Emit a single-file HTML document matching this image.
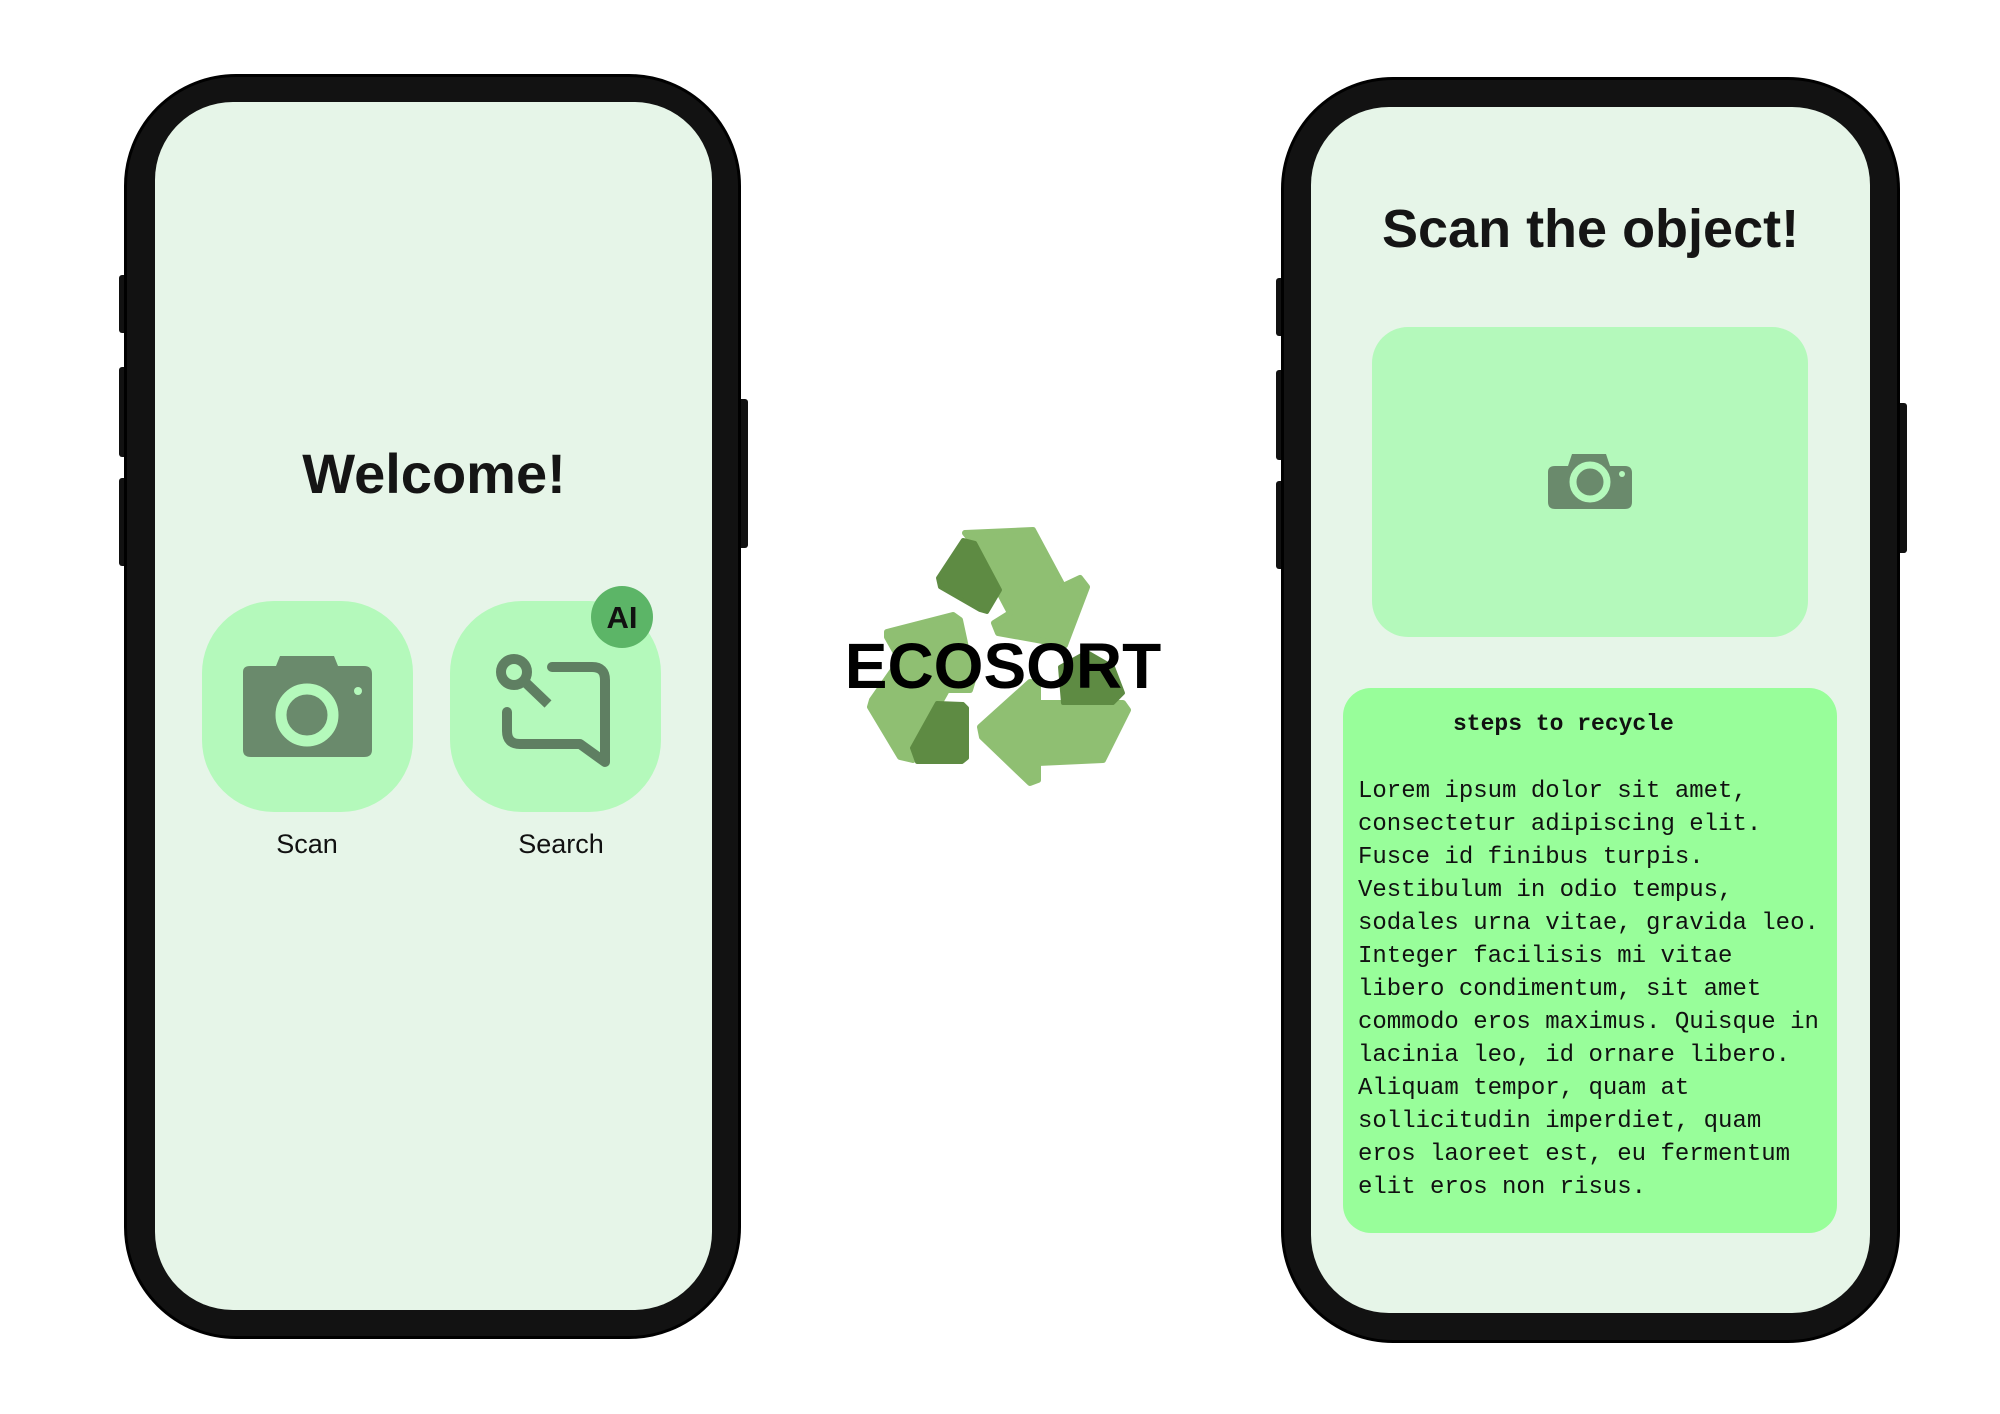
<!DOCTYPE html>
<html><head><meta charset="utf-8"><style>
*{margin:0;padding:0;box-sizing:border-box}
body{width:2000px;height:1414px;background:#fff;position:relative;overflow:hidden;font-family:"Liberation Sans",sans-serif}
.ph{position:absolute;background:#121212;border:3px solid #000;border-radius:112px}
.scr{position:absolute;background:#e6f5e8;border-radius:78px}
.btn{position:absolute;background:#111;border-radius:3px}
.tile{position:absolute;background:#b4f9bb;border-radius:72px}
.t{position:absolute;font-weight:bold;color:#151515;white-space:nowrap}
.lbl{position:absolute;font-size:27px;color:#111;transform:translateX(-50%);white-space:nowrap}
.mono{font-family:"Liberation Mono",monospace}
</style></head><body>

<!-- Left phone -->
<div class="btn" style="left:119px;top:275px;width:8px;height:58px"></div>
<div class="btn" style="left:119px;top:367px;width:8px;height:90px"></div>
<div class="btn" style="left:119px;top:478px;width:8px;height:88px"></div>
<div class="btn" style="left:738px;top:399px;width:10px;height:149px"></div>
<div class="ph" style="left:124px;top:74px;width:617px;height:1265px"></div>
<div class="scr" style="left:155px;top:102px;width:557px;height:1208px"></div>
<div class="t" style="left:434px;top:441px;font-size:56px;transform:translateX(-50%)">Welcome!</div>

<div class="tile" style="left:202px;top:601px;width:211px;height:211px"></div>
<div class="tile" style="left:450px;top:601px;width:211px;height:211px"></div>
<svg style="position:absolute;left:0;top:0" width="2000" height="1414">
 <path d="M243 672 Q243 666 250 666 L276 666 L280 656 L334 656 L338 666 L364 666 Q372 666 372 674 L372 750 Q372 757 364 757 L251 757 Q243 757 243 750 Z" fill="#6a8a6c"/>
 <circle cx="307" cy="715" r="26" fill="none" stroke="#b4f9bb" stroke-width="11"/>
 <circle cx="358" cy="691" r="4" fill="#b4f9bb"/>
 <circle cx="514" cy="672" r="13" fill="none" stroke="#5f7f62" stroke-width="10"/>
 <path d="M525 682 L548 704" stroke="#5f7f62" stroke-width="10" fill="none"/>
 <path d="M552 667 L592 667 Q605 667 605 680 L605 762 L580 744 L520 744 Q507 744 507 731 L507 712" stroke="#5f7f62" stroke-width="10" fill="none" stroke-linejoin="round" stroke-linecap="round"/>
 <circle cx="622" cy="617" r="31" fill="#5cb567"/>
 <text x="622" y="628" font-family="Liberation Sans" font-weight="bold" font-size="31" text-anchor="middle" fill="#111">AI</text>

 <g fill="#8fbf72" stroke="#8fbf72" stroke-width="6" stroke-linejoin="round">
  <polygon points="965,533 1033,530 1063,586 1080,578 1087,587 1065,645 998,633 994,623 1010,613 973,543"/>
  <polygon points="887,632 953,615 960,620 973,680 970,690 947,690 915,747 913,760 900,757 870,707 872,700 900,660 887,637"/>
  <polygon points="980,727 1030,682 1038,683 1038,703 1123,703 1128,710 1103,760 1038,763 1038,780 1030,783 982,737"/>
 </g>
 <g fill="#5e8b43" stroke="#5e8b43" stroke-width="4" stroke-linejoin="round">
  <polygon points="938,578 963,540 975,543 1000,590 987,612 980,610 940,587"/>
  <polygon points="937,703 963,704 967,708 967,758 962,762 917,762 912,748"/>
  <polygon points="1060,667 1087,652 1113,667 1123,693 1113,703 1063,703"/>
 </g>
 <text x="1003" y="688" font-family="Liberation Sans" font-weight="bold" font-size="64" text-anchor="middle" fill="#000">ECOSORT</text>
</svg>

<!-- Right phone -->
<div class="btn" style="left:1276px;top:278px;width:8px;height:58px"></div>
<div class="btn" style="left:1276px;top:370px;width:8px;height:90px"></div>
<div class="btn" style="left:1276px;top:481px;width:8px;height:88px"></div>
<div class="btn" style="left:1897px;top:403px;width:10px;height:150px"></div>
<div class="ph" style="left:1281px;top:77px;width:619px;height:1266px"></div>
<div class="scr" style="left:1311px;top:107px;width:559px;height:1206px"></div>
<div class="t" style="left:1382px;top:198px;font-size:54px">Scan the object!</div>
<div style="position:absolute;left:1372px;top:327px;width:436px;height:310px;background:#b4f9bb;border-radius:36px"></div>
<svg style="position:absolute;left:1540px;top:444px" width="100" height="70">
 <path d="M8 28 Q8 22 15 22 L28 22 L32 10 L66 10 L70 22 L85 22 Q92 22 92 29 L92 58 Q92 65 85 65 L15 65 Q8 65 8 58 Z" fill="#6a8a6c"/>
 <circle cx="50" cy="38" r="17" fill="none" stroke="#b4f9bb" stroke-width="7"/>
 <circle cx="82" cy="30" r="3" fill="#b4f9bb"/>
</svg>
<div style="position:absolute;left:1343px;top:688px;width:494px;height:545px;background:#98fe9a;border-radius:28px"></div>
<div class="t mono" style="left:1453px;top:711px;font-size:23px;color:#111">steps to recycle</div>
<div class="mono" style="position:absolute;left:1358px;top:775px;font-size:24px;line-height:33px;color:#111;white-space:pre">Lorem ipsum dolor sit amet,
consectetur adipiscing elit.
Fusce id finibus turpis.
Vestibulum in odio tempus,
sodales urna vitae, gravida leo.
Integer facilisis mi vitae
libero condimentum, sit amet
commodo eros maximus. Quisque in
lacinia leo, id ornare libero.
Aliquam tempor, quam at
sollicitudin imperdiet, quam
eros laoreet est, eu fermentum
elit eros non risus.</div>
<div class="lbl" style="left:307px;top:829px">Scan</div>
<div class="lbl" style="left:561px;top:829px">Search</div>
</body></html>
